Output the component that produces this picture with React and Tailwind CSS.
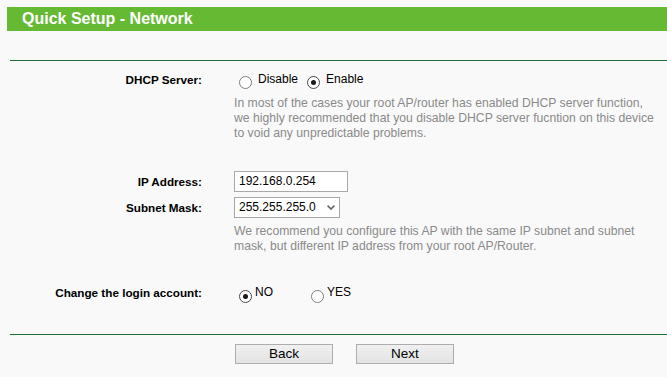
import React from "react";

function Radio({ checked, className = "" }) {
  return (
    <span
      className={
        "inline-flex w-[13px] h-[13px] shrink-0 rounded-full border bg-white items-center justify-center " +
        (checked ? "border-[#4a4a4a] " : "border-[#7d7d7d] ") +
        className
      }
    >
      {checked && <span className="block w-[5px] h-[5px] rounded-full bg-[#1a1a1a]" />}
    </span>
  );
}

export default function App() {
  return (
    <div className="min-h-[377px] w-full overflow-hidden bg-[#f9f9f9] font-['Liberation_Sans',Arial,sans-serif] text-[12px] text-black">
      <div className="pt-[7px] pl-[7px]">
        <div className="h-[24px] bg-[#66b933] pl-[15px] text-[16px] font-bold leading-[24px] text-white">
          Quick Setup - Network
        </div>
      </div>
      <div className="ml-[10px] mt-[29px] h-px bg-[#1f6e3c]" />

      {/* DHCP Server */}
      <div className="mt-[10px] flex items-start leading-[17px]">
        <div className="w-[202px] shrink-0 text-right text-[11.7px] font-bold">DHCP Server:</div>
        <div className="ml-[32px] flex items-start">
          <Radio className="ml-[5px] mt-[5px]" />
          <span className="ml-[6px]">Disable</span>
          <Radio checked className="ml-[9px] mt-[5px]" />
          <span className="ml-[6px]">Enable</span>
        </div>
      </div>
      <div className="ml-[234px] mt-[7px] text-[12.2px] leading-[15px] text-[#8a8a8a]">
        In most of the cases your root AP/router has enabled DHCP server function,
        <br />
        we highly recommended that you disable DHCP server fucntion on this device
        <br />
        to void any unpredictable problems.
      </div>

      {/* IP Address */}
      <div className="mt-[30px] flex h-[21px] items-center">
        <div className="w-[202px] shrink-0 text-right text-[11.7px] font-bold">IP Address:</div>
        <div className="ml-[32px] h-[21px] w-[114px] border border-[#a9a9a9] bg-white pl-[4px] leading-[19px]">
          192.168.0.254
        </div>
      </div>

      {/* Subnet Mask */}
      <div className="mt-[5px] flex h-[21px] items-center">
        <div className="w-[202px] shrink-0 text-right text-[11.7px] font-bold">Subnet Mask:</div>
        <div className="ml-[32px] flex h-[21px] w-[106px] items-center border border-[#a6a6a6] bg-white pl-[4px]">
          <span className="leading-[19px]">255.255.255.0</span>
          <svg
            className="ml-auto mr-[4px]"
            width="8"
            height="5"
            viewBox="0 0 8 5"
            fill="none"
            stroke="#666"
            strokeWidth="1.6"
          >
            <path d="M0.6 0.6 L4 4 L7.4 0.6" />
          </svg>
        </div>
      </div>
      <div className="ml-[234px] mt-[6px] text-[12.2px] leading-[15px] text-[#8a8a8a]">
        We recommend you configure this AP with the same IP subnet and subnet
        <br />
        mask, but different IP address from your root AP/Router.
      </div>

      {/* Change login account */}
      <div className="mt-[30px] flex items-start leading-[17px]">
        <div className="w-[202px] shrink-0 text-right text-[11.7px] font-bold">Change the login account:</div>
        <div className="ml-[32px] flex items-start">
          <div className="flex w-[72px] items-start">
            <Radio checked className="ml-[5px] mt-[6px]" />
            <span className="ml-[3px]">NO</span>
          </div>
          <Radio className="ml-[5px] mt-[6px]" />
          <span className="ml-[3px]">YES</span>
        </div>
      </div>

      <div className="ml-[10px] mt-[31px] h-px bg-[#1f6e3c]" />

      <div className="mt-[9px] flex gap-[23px] pl-[235px]">
        <button className="h-[20px] w-[98px] border border-[#adadad] bg-linear-to-b from-[#f0f0f0] to-[#e3e3e3] text-center text-[13.5px] leading-[18px] text-black">
          Back
        </button>
        <button className="h-[20px] w-[98px] border border-[#adadad] bg-linear-to-b from-[#f0f0f0] to-[#e3e3e3] text-center text-[13.5px] leading-[18px] text-black">
          Next
        </button>
      </div>
    </div>
  );
}
